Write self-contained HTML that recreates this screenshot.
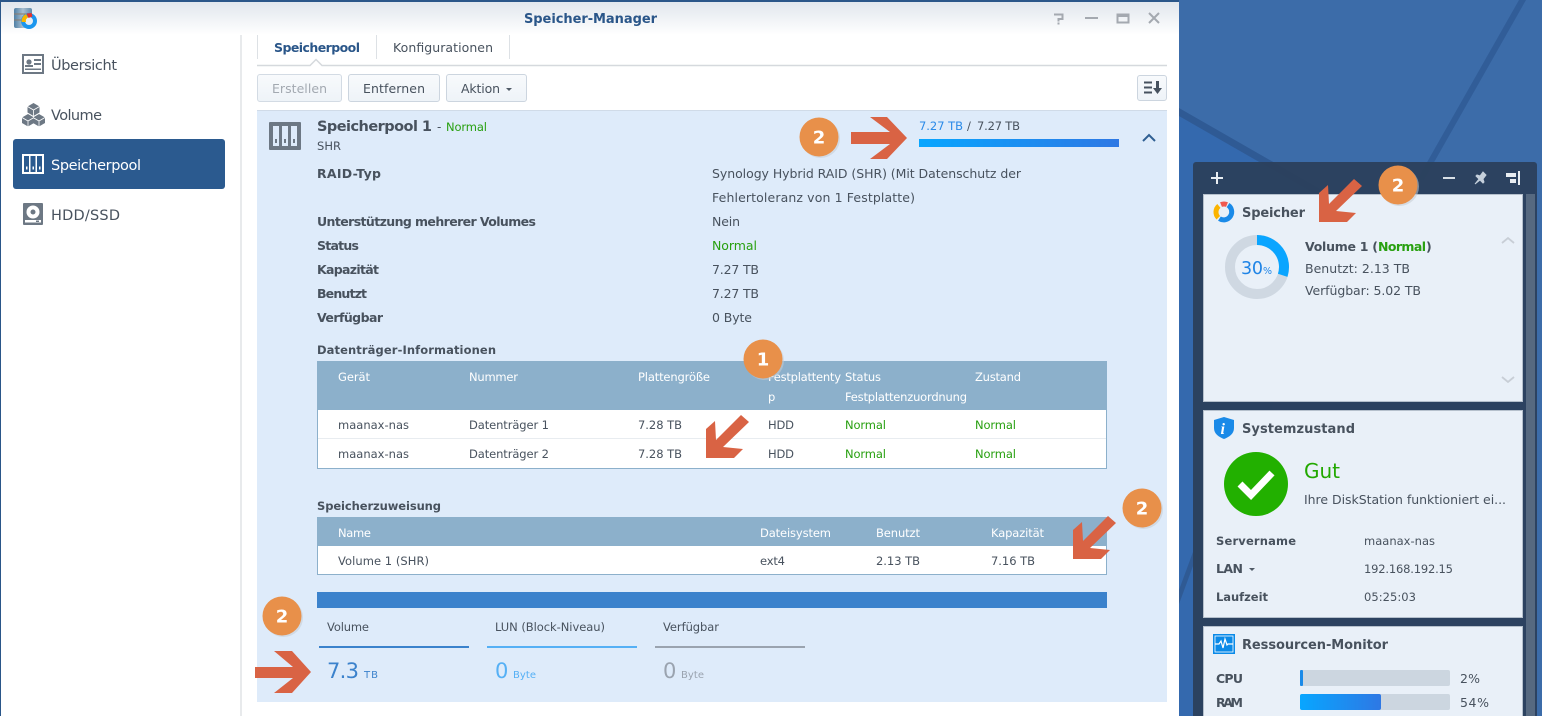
<!DOCTYPE html>
<html lang="de"><head><meta charset="utf-8"><title>Speicher-Manager</title>
<style>
html,body{margin:0;padding:0;background:#3a6aa8;overflow:hidden}
svg{display:block;position:absolute;left:0;top:0}
text{font-family:"DejaVu Sans","Liberation Sans",sans-serif;font-size:12px;fill:#48525e}
.b{font-weight:bold}
.l{font-size:12.5px;font-weight:bold}
.r{font-size:12.5px}
.t{font-size:11.5px}
.h{font-size:11.5px;fill:#fff}
.g{fill:#28a010}
.n{font-size:18px;font-weight:bold;fill:#fff;text-anchor:middle}
</style></head><body>
<svg width="1542" height="716" viewBox="0 0 1542 716" xmlns="http://www.w3.org/2000/svg">
<defs>
<linearGradient id="tg" x1="0" y1="0" x2="0" y2="1"><stop offset="0" stop-color="#dfe5ec"/><stop offset="1" stop-color="#fff"/></linearGradient>
<linearGradient id="bg" x1="0" y1="0" x2="1" y2="0"><stop offset="0" stop-color="#08a6ff"/><stop offset="1" stop-color="#2e78e4"/></linearGradient>
<linearGradient id="btn" x1="0" y1="0" x2="0" y2="1"><stop offset="0" stop-color="#f8fafc"/><stop offset="1" stop-color="#eef3f8"/></linearGradient>
<linearGradient id="db" x1="0" y1="0" x2="1" y2="0"><stop offset="0" stop-color="#4f80a6"/><stop offset=".5" stop-color="#a9bfd0"/><stop offset="1" stop-color="#5f8aab"/></linearGradient>
<polygon id="da" points="0,0 0,-29 9,-37 10,-18 35,-43 43,-36 17,-11 37,-9 28,0" fill="#d96344"/>
<g id="bd"><circle cx="1.5" cy="1.5" r="19.5" fill="#c4ccd4" opacity=".55"/><circle r="19.5" fill="#e8904a"/></g>
</defs>

<!-- desktop -->
<rect x="1179" width="363" height="716" fill="#3c6ca9"/>
<polygon points="1179,112 1322,194 1200,716 1179,716" fill="#3469ae"/>
<polygon points="1179,108 1322,190 1322,198 1179,116" fill="#2f5a94"/>
<polygon points="1519,0 1526,0 1424,180 1417,180" fill="#315d98"/>
<polygon points="1179,590 1193,552 1193,566 1179,604" fill="#2f5a94"/>

<!-- window -->
<rect width="1179" height="716" fill="#fff"/>
<rect width="1179" height="35" fill="url(#tg)"/>
<rect width="1179" height="2" fill="#2a5689"/>
<rect width="1" height="716" fill="#2a5689"/>
<rect x="240" y="35" width="2" height="681" fill="#e8eaec"/>

<!-- app icon -->
<rect x="14" y="8" width="18" height="20" rx="2" fill="url(#db)"/>
<path d="M14 14H32M14 20H32" stroke="#8c7a6a" stroke-width="1"/>
<circle cx="29" cy="21" r="6" fill="#e8eef4" stroke="#1a96ee" stroke-width="4"/>
<path d="M21.500 22a8 8 0 0 1 4.500-8l2 3.500a4 4 0 0 0-2 4.500z" fill="#f7b500"/>
<path d="M26.500 13.500l5-.500 1 3.500-4 1.500z" fill="#e8312a"/>

<text class="b" x="524" y="23" textLength="133" style="font-size:13px;fill:#2a5689">Speicher-Manager</text>

<!-- window controls -->
<path d="M1054 14.500h8.500v4.500h-4v2.500" fill="none" stroke="#a4a9b0" stroke-width="2"/>
<rect x="1057.500" y="22.500" width="2" height="2" fill="#a4a9b0"/>
<rect x="1085" y="17" width="13" height="2" fill="#a4a9b0"/>
<rect x="1117.500" y="14.500" width="11" height="8" fill="none" stroke="#a4a9b0" stroke-width="2"/>
<rect x="1117" y="14" width="12" height="3" fill="#a4a9b0"/>
<path d="M1149 13l10 10M1159 13l-10 10" stroke="#a4a9b0" stroke-width="2"/>

<!-- sidebar -->
<rect x="13" y="139" width="212" height="50" rx="3" fill="#2b5a8f"/>
<g>
<rect x="22" y="54" width="22" height="20" fill="#6d7884"/>
<rect x="24" y="56" width="18" height="16" fill="#fff"/>
<circle cx="29" cy="62" r="2.600" fill="#6d7884"/><rect x="25" y="65" width="8" height="2" fill="#6d7884"/>
<rect x="34" y="59" width="7" height="2" fill="#6d7884"/><rect x="34" y="63" width="7" height="2" fill="#6d7884"/><rect x="25" y="68.500" width="16" height="1.500" fill="#6d7884"/>
</g>
<text x="51" y="70" textLength="66" style="font-size:14.500px">Übersicht</text>
<g fill="#6d7884">
<polygon points="33.500,103 39.500,106.500 39.500,112.500 33.500,116 27.500,112.500 27.500,106.500"/>
<polygon points="28,114 34,117.500 34,123 28,126.500 22,123 22,117.500"/>
<polygon points="39,114 45,117.500 45,123 39,126.500 33,123 33,117.500"/>
</g>
<path d="M27.500 106.500l6 3.500 6-3.500M33.500 110v6M22 117.500l6 3.500 6-3.500M28 121v5.500M33 117.500l6 3.500 6-3.500M39 121v5.500" fill="none" stroke="#fff" stroke-width=".8"/>
<text x="51" y="120" textLength="51" style="font-size:14.500px">Volume</text>
<rect x="22" y="154" width="22" height="20" fill="#fff"/>
<path d="M24 156h5v16h-5zM30.500 156h5v16h-5zM37 156h5v16h-5z" fill="#2b5a8f"/>
<path d="M26 166.500h1.500v3H26zM32.500 166.500h1.500v3h-1.500zM39 166.500h1.500v3H39z" fill="#fff"/>
<text x="51" y="170" textLength="90" style="font-size:14.500px;fill:#fff">Speicherpool</text>
<rect x="23" y="203" width="20" height="22" rx="1" fill="#6d7884"/>
<circle cx="33" cy="212" r="6.500" fill="#fff"/><circle cx="33" cy="212" r="2.500" fill="#6d7884"/>
<rect x="25" y="220" width="16" height="2.500" fill="#fff"/><rect x="36" y="220.500" width="3" height="1.500" fill="#6d7884"/>
<text x="51" y="220" textLength="69" style="font-size:14.500px">HDD/SSD</text>

<!-- tabs -->
<path d="M257.500 35v24M376.500 35v24M509.500 35v24" stroke="#dde1e5"/>
<path d="M257 65.500H310l6-6 6 6H1167" fill="none" stroke="#d5d9dd" stroke-width="1.500"/>
<text class="b" x="274" y="52" textLength="86" style="font-size:12.500px;fill:#2a5689">Speicherpool</text>
<text x="393" y="52" textLength="100" style="font-size:12.500px">Konfigurationen</text>

<!-- toolbar -->
<rect x="257.500" y="74.500" width="84" height="27" rx="2.500" fill="url(#btn)" stroke="#d3dbe4"/>
<rect x="348.500" y="74.500" width="91" height="27" rx="2.500" fill="url(#btn)" stroke="#ccd5df"/>
<rect x="446.500" y="74.500" width="80" height="27" rx="2.500" fill="url(#btn)" stroke="#ccd5df"/>
<rect x="1137.500" y="75.500" width="29" height="25" rx="2.500" fill="url(#btn)" stroke="#ccd5df"/>
<text x="272" y="93" textLength="55" style="font-size:12.500px;fill:#a3a9b1">Erstellen</text>
<text x="363" y="93" textLength="62" style="font-size:12.500px">Entfernen</text>
<text x="461" y="93" textLength="39" style="font-size:12.500px">Aktion</text>
<polygon points="506,88 512,88 509,91" fill="#505a66"/>
<path d="M1144 82.500h8M1144 87.500h8M1144 92.500h8" stroke="#47525f" stroke-width="2"/>
<path d="M1156 81h3v7h3l-4.500 6-4.500-6h3z" fill="#47525f"/>

<!-- panel -->
<rect x="257" y="110" width="910" height="592" fill="#deebfa"/>
<rect x="257" y="110" width="910" height="1" fill="#d0dbe8"/>
<rect x="269" y="122" width="32" height="28" rx="1" fill="#6d7884"/>
<path d="M273 126h6v20h-6zM282 126h6v20h-6zM291 126h6v20h-6z" fill="#deebfa"/>
<path d="M275 139h2v4h-2zM284 139h2v4h-2zM293 139h2v4h-2z" fill="#6d7884"/>
<text class="b" x="317" y="131" textLength="115" style="font-size:14.500px">Speicherpool 1</text>
<text x="437" y="131" textLength="5" style="font-size:12px">-</text>
<text class="g" x="446" y="131" textLength="41" style="font-size:11.500px">Normal</text>
<text class="t" x="317" y="150" textLength="24">SHR</text>

<text class="t" x="919" y="130" textLength="44" style="fill:#2a8ae8">7.27 TB</text>
<text class="t" x="967" y="130" textLength="5">/</text>
<text class="t" x="977" y="130" textLength="43">7.27 TB</text>
<rect x="919" y="139" width="200" height="8" fill="url(#bg)"/>
<path d="M1143 141l6-6 6 6" fill="none" stroke="#2f5f92" stroke-width="2"/>

<text class="l" x="317" y="178" textLength="64">RAID-Typ</text>
<text class="l" x="317" y="226" textLength="219">Unterstützung mehrerer Volumes</text>
<text class="l" x="317" y="250" textLength="42">Status</text>
<text class="l" x="317" y="274" textLength="62">Kapazität</text>
<text class="l" x="317" y="298" textLength="50">Benutzt</text>
<text class="l" x="317" y="322" textLength="66">Verfügbar</text>
<text class="r" x="712" y="178" textLength="309">Synology Hybrid RAID (SHR) (Mit Datenschutz der</text>
<text class="r" x="712" y="202" textLength="203">Fehlertoleranz von 1 Festplatte)</text>
<text class="r" x="712" y="226" textLength="28">Nein</text>
<text class="r g" x="712" y="250" textLength="45">Normal</text>
<text class="r" x="712" y="274" textLength="47">7.27 TB</text>
<text class="r" x="712" y="298" textLength="47">7.27 TB</text>
<text class="r" x="712" y="322" textLength="40">0 Byte</text>

<!-- table 1 -->
<text class="b t" x="317" y="354" textLength="179">Datenträger-Informationen</text>
<rect x="317.500" y="361.500" width="789" height="107" fill="#fff" stroke="#8cb0cb"/>
<rect x="317" y="361" width="790" height="49" fill="#8cb0cb"/>
<rect x="318" y="438" width="788" height="1" fill="#e8ecf0"/>
<text class="h" x="338" y="381" textLength="32">Gerät</text>
<text class="h" x="469" y="381" textLength="49">Nummer</text>
<text class="h" x="638" y="381" textLength="72">Plattengröße</text>
<text class="h" x="768" y="381" textLength="73">Festplattenty</text>
<text class="h" x="768" y="401" textLength="7">p</text>
<text class="h" x="845" y="381" textLength="36">Status</text>
<text class="h" x="845" y="401" textLength="122">Festplattenzuordnung</text>
<text class="h" x="975" y="381" textLength="46">Zustand</text>
<text class="t" x="338" y="429" textLength="71">maanax-nas</text>
<text class="t" x="469" y="429" textLength="80">Datenträger 1</text>
<text class="t" x="638" y="429" textLength="44">7.28 TB</text>
<text class="t" x="768" y="429" textLength="26">HDD</text>
<text class="t g" x="845" y="429" textLength="41">Normal</text>
<text class="t g" x="975" y="429" textLength="41">Normal</text>
<text class="t" x="338" y="458" textLength="71">maanax-nas</text>
<text class="t" x="469" y="458" textLength="80">Datenträger 2</text>
<text class="t" x="638" y="458" textLength="44">7.28 TB</text>
<text class="t" x="768" y="458" textLength="26">HDD</text>
<text class="t g" x="845" y="458" textLength="41">Normal</text>
<text class="t g" x="975" y="458" textLength="41">Normal</text>

<!-- table 2 -->
<text class="b t" x="317" y="510" textLength="124">Speicherzuweisung</text>
<rect x="317.500" y="517.500" width="789" height="57" fill="#fff" stroke="#8cb0cb"/>
<rect x="317" y="517" width="790" height="29" fill="#8cb0cb"/>
<text class="h" x="338" y="537" textLength="33">Name</text>
<text class="h" x="760" y="537" textLength="71">Dateisystem</text>
<text class="h" x="876" y="537" textLength="44">Benutzt</text>
<text class="h" x="991" y="537" textLength="53">Kapazität</text>
<text class="t" x="338" y="565" textLength="91">Volume 1 (SHR)</text>
<text class="t" x="760" y="565" textLength="25">ext4</text>
<text class="t" x="876" y="565" textLength="44">2.13 TB</text>
<text class="t" x="991" y="565" textLength="44">7.16 TB</text>

<!-- allocation -->
<rect x="317" y="592" width="790" height="16" fill="#3b82cc"/>
<text class="t" x="327" y="631" textLength="42">Volume</text>
<text class="t" x="495" y="631" textLength="110">LUN (Block-Niveau)</text>
<text class="t" x="663" y="631" textLength="56">Verfügbar</text>
<rect x="319" y="646" width="150" height="2" fill="#3b82cc"/>
<rect x="487" y="646" width="150" height="2" fill="#55b0f5"/>
<rect x="655" y="646" width="150" height="2" fill="#9aa3af"/>
<text x="327" y="678" textLength="32" style="font-size:21px;fill:#3b82cc">7.3</text>
<text x="364" y="678" textLength="14" style="font-size:10px;fill:#3b82cc">TB</text>
<text x="495" y="678" textLength="13" style="font-size:21px;fill:#55b0f5">0</text>
<text x="513" y="678" textLength="23" style="font-size:10px;fill:#55b0f5">Byte</text>
<text x="663" y="678" textLength="13" style="font-size:21px;fill:#9aa3af">0</text>
<text x="681" y="678" textLength="23" style="font-size:10px;fill:#9aa3af">Byte</text>

<!-- widget panel -->
<path d="M1193 716V165a3 3 0 0 1 3-3h338a3 3 0 0 1 3 3v551z" fill="#2b405c" fill-opacity=".95"/>
<rect x="1526" y="194" width="9" height="522" fill="#566980"/>
<path d="M1211 178h12M1217 172v12" stroke="#e8edf2" stroke-width="2"/>
<rect x="1443" y="177" width="12" height="2" fill="#d8dfe6"/>
<path d="M1475 184l4-5-3-3 1-1 3 1 3-4 3 3-3 4 1 3-1 1-3-3z" fill="#c5d0dc" stroke="#c5d0dc"/>
<rect x="1506" y="173" width="10" height="4" fill="#e8edf2"/><rect x="1510" y="179" width="6" height="4" fill="#e8edf2"/><rect x="1518" y="171" width="2" height="14" fill="#e8edf2"/>

<!-- Speicher card -->
<rect x="1203.500" y="194.500" width="319" height="207" fill="#e9f0f8" stroke="#b5c0cc"/>
<path d="M1228 205.100A8 8 0 1 1 1219.400 218.600" fill="none" stroke="#1a8ae8" stroke-width="5"/>
<path d="M1218.300 217.700A8 8 0 0 1 1218.900 205.900" fill="none" stroke="#fbb400" stroke-width="5"/>
<path d="M1221 204.600A8 8 0 0 1 1227 204.600" fill="none" stroke="#f05a50" stroke-width="5"/>
<text class="b" x="1242" y="217" textLength="63" style="font-size:13px">Speicher</text>
<circle cx="1257" cy="267" r="27" fill="none" stroke="#cfd8e2" stroke-width="10"/>
<path d="M1257 240a27 27 0 0 1 25.700 35.300" fill="none" stroke="#0aa5ff" stroke-width="10"/>
<text x="1241" y="274" textLength="22" style="font-size:17.500px;fill:#1f84e6">30</text>
<text x="1263" y="274" textLength="11" style="font-size:9.500px;fill:#1f84e6">%</text>
<text class="b" x="1305" y="251" textLength="73" style="font-size:12.500px">Volume 1 (</text>
<text class="b g" x="1378" y="251" textLength="48" style="font-size:12.500px">Normal</text>
<text class="b" x="1426" y="251" textLength="7" style="font-size:12.500px">)</text>
<text class="r" x="1305" y="273" textLength="105">Benutzt: 2.13 TB</text>
<text class="r" x="1305" y="295" textLength="116">Verfügbar: 5.02 TB</text>
<path d="M1502 243l6-5 6 5M1502 377l6 5 6-5" fill="none" stroke="#c8ced6" stroke-width="1.800"/>

<!-- Systemzustand card -->
<rect x="1203.500" y="410.500" width="319" height="207" fill="#e9f0f8" stroke="#b5c0cc"/>
<path d="M1224 417l10 3v8c0 6-5 9-10 11-5-2-10-5-10-11v-8z" fill="#1a8ae8"/>
<text x="1220.500" y="434" style="font-size:16px;font-weight:bold;font-style:italic;fill:#fff;font-family:'Liberation Serif',serif">i</text>
<text class="b" x="1242" y="433" textLength="113" style="font-size:13px">Systemzustand</text>
<circle cx="1256" cy="484" r="32" fill="#22b000"/>
<path d="M1240 484l11 11 21-22" fill="none" stroke="#fff" stroke-width="7"/>
<text x="1304" y="478" textLength="36" style="font-size:20px;fill:#22a800">Gut</text>
<text class="r" x="1304" y="504" textLength="202">Ihre DiskStation funktioniert ei...</text>
<text class="b t" x="1216" y="545" textLength="80">Servername</text>
<text class="t" x="1364" y="545" textLength="71">maanax-nas</text>
<text class="b" x="1216" y="573" textLength="27" style="font-size:12.500px">LAN</text>
<polygon points="1249,568 1255,568 1252,571" fill="#505a66"/>
<text class="t" x="1364" y="573" textLength="89">192.168.192.15</text>
<text class="b t" x="1216" y="601" textLength="52">Laufzeit</text>
<text class="t" x="1364" y="601" textLength="52">05:25:03</text>

<!-- Ressourcen card -->
<rect x="1203.500" y="626.500" width="319" height="100" fill="#e9f0f8" stroke="#b5c0cc"/>
<rect x="1213" y="634" width="22" height="20" fill="#0a8ae8"/>
<rect x="1215" y="636" width="18" height="16" fill="none" stroke="#fff" stroke-width=".8"/>
<path d="M1215 644h4l2-3 2 7 2-9 2 6 1-1h5" fill="none" stroke="#fff" stroke-width="1.200"/>
<text class="b" x="1242" y="649" textLength="146" style="font-size:13px">Ressourcen-Monitor</text>
<text class="b" x="1216" y="683" textLength="27" style="font-size:12.500px">CPU</text>
<rect x="1300" y="670" width="150" height="16" rx="2" fill="#ccd6e0"/>
<rect x="1300" y="670" width="3" height="16" rx="1" fill="#1a8ae8"/>
<text class="r" x="1460" y="683" textLength="20">2%</text>
<text class="b" x="1216" y="707" textLength="27" style="font-size:12.500px">RAM</text>
<rect x="1300" y="694" width="150" height="16" rx="2" fill="#ccd6e0"/>
<rect x="1300" y="694" width="81" height="16" rx="2" fill="url(#bg)"/>
<text class="r" x="1460" y="707" textLength="29">54%</text>

<!-- annotations -->
<polygon points="851,132 890,132 870,117 887,117 907,138 887,159 870,159 890,144 851,144" fill="#d96344"/>
<polygon points="255,667 293,667 274,651 292,651 311,672 292,693 274,693 293,678 255,678" fill="#d96344"/>
<use href="#da" x="1319" y="222"/>
<use href="#da" x="706" y="458"/>
<use href="#da" x="1073" y="559"/>
<use href="#bd" x="819" y="137"/><text class="n" x="819" y="143.500">2</text>
<use href="#bd" x="1398" y="185"/><text class="n" x="1398" y="191.500">2</text>
<use href="#bd" x="763" y="359"/><text class="n" x="763" y="365.500">1</text>
<use href="#bd" x="1142" y="508"/><text class="n" x="1142" y="514.500">2</text>
<use href="#bd" x="282" y="616"/><text class="n" x="282" y="622.500">2</text>
</svg>
</body></html>
